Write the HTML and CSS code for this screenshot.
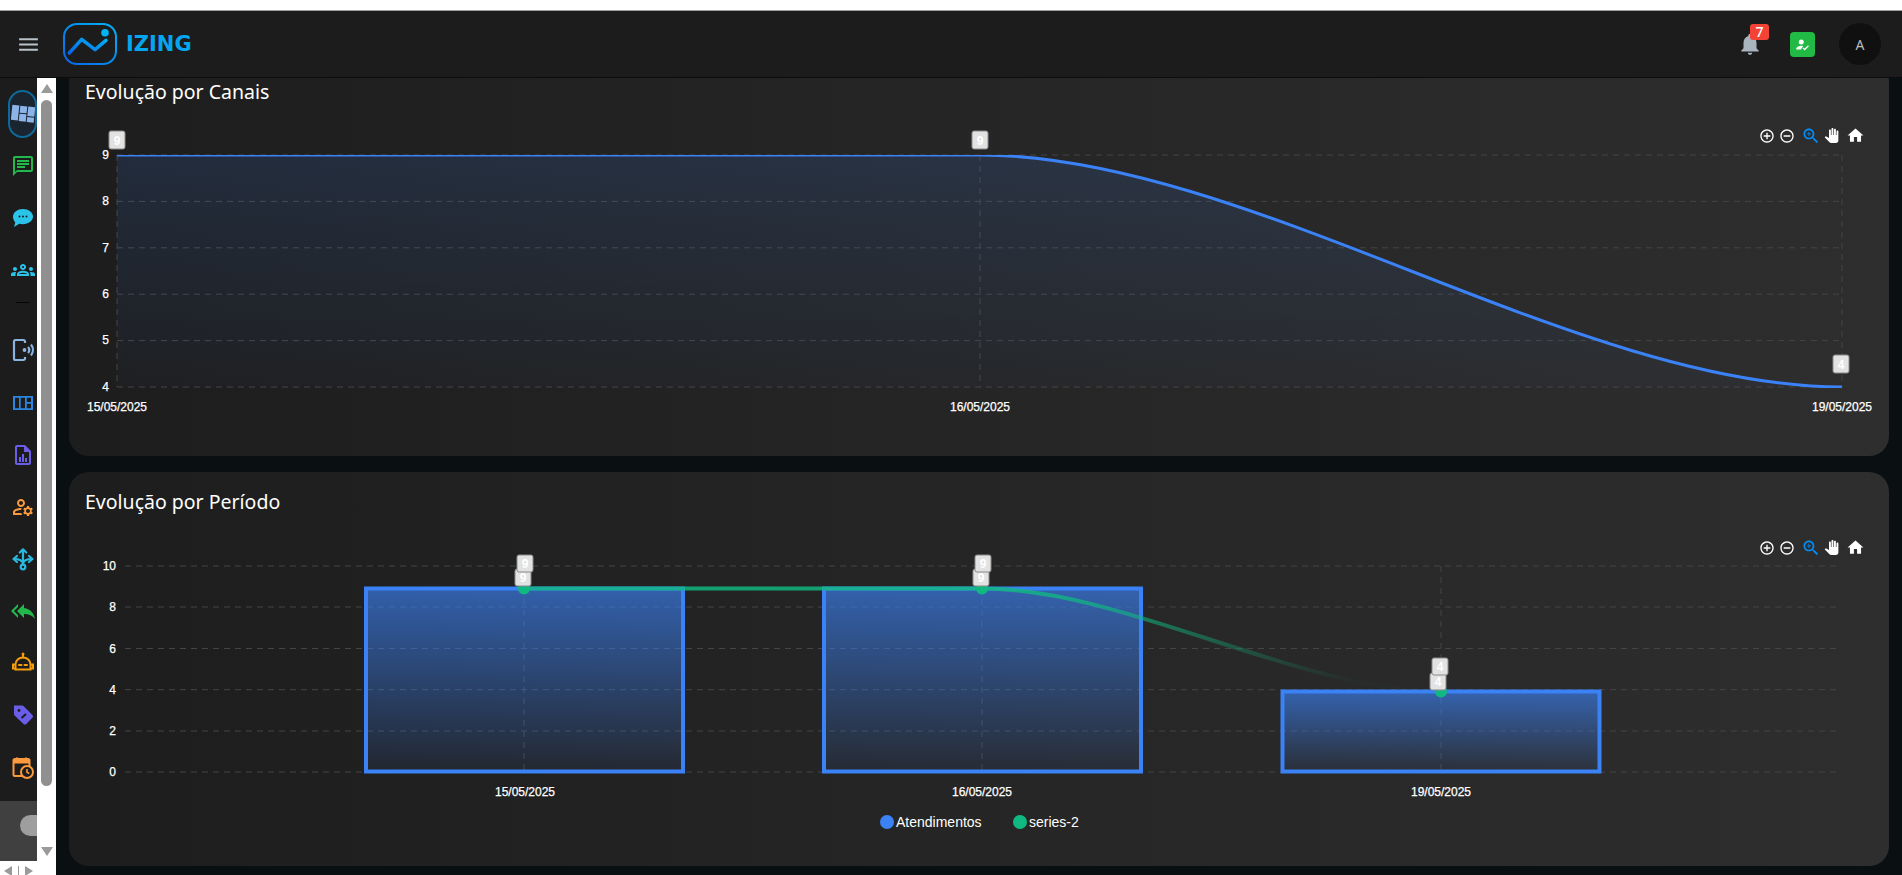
FILE: index.html
```html
<!DOCTYPE html>
<html lang="pt-BR">
<head>
    <meta charset="UTF-8">
    <meta name="viewport" content="width=device-width, initial-scale=1.0">
    <title>IZING - Dashboard</title>
    <link rel="stylesheet" href="styles.css">
</head>
<body>
    <header class="topbar">
        <svg class="menu-icon" viewBox="0 0 24 24"><path d="M3 18h18v-2H3v2zm0-5h18v-2H3v2zm0-7v2h18V6H3z"/></svg>
        <div class="brand">
            <svg class="brand-logo" viewBox="0 0 54 42">
                <defs>
                    <linearGradient id="logoStroke" x1="0" y1="1" x2="1" y2="0">
                        <stop offset="0" stop-color="#0a66e8"/>
                        <stop offset="1" stop-color="#00b2f5"/>
                    </linearGradient>
                </defs>
                <rect x="1" y="1" width="52" height="40" rx="13" fill="none" stroke="url(#logoStroke)" stroke-width="2"/>
                <polyline points="6.300,30 18.700,16.300 32,26.700 43,17.300" fill="none" stroke="url(#logoStroke)" stroke-width="3.500" stroke-linecap="round" stroke-linejoin="round"/>
                <circle cx="42" cy="9.700" r="3.800" fill="#00b4f5"/>
            </svg>
            <span class="brand-name">IZING</span>
        </div>
        <div class="topbar-right">
            <div class="bell">
                <svg class="bell-icon" viewBox="0 0 24 24"><path d="M12 22c1.100 0 2-.9 2-2h-4c0 1.100.9 2 2 2zm6-6v-5c0-3.070-1.630-5.640-4.500-6.320V4c0-.83-.67-1.500-1.500-1.500s-1.500.67-1.500 1.500v.68C7.640 5.360 6 7.920 6 11v5l-2 2v1h16v-1l-2-2z"/></svg>
                <span class="bell-badge">7</span>
            </div>
            <div class="status-btn">
                <svg viewBox="0 0 24 24">
                    <circle cx="10" cy="8" r="4"/>
                    <path d="M2 20v-1.500c0-3 5-4.700 8-4.700 1 0 2 .2 3 .5L9.500 20z"/>
                    <path class="status-check" d="M13 17.500l2.500 2.500 6-6"/>
                </svg>
            </div>
            <div class="avatar">A</div>
        </div>
    </header>

    <div class="layout">
        <aside class="sidebar">
            <div class="sidebar-body">
                <nav class="side-menu">
                    <a class="side-item side-item-active">
                        <span class="side-pill">
                            <svg class="side-icon" viewBox="0 0 24 24" fill="#8db4e8">
                                <g transform="rotate(6 12 12)">
                                    <rect x="0.500" y="4" width="7" height="15"/>
                                    <rect x="8.500" y="4" width="7" height="7"/>
                                    <rect x="8.500" y="12" width="7" height="7.500"/>
                                    <rect x="16.500" y="4" width="7" height="9.500"/>
                                    <rect x="16.500" y="14.500" width="7" height="5"/>
                                </g>
                            </svg>
                        </span>
                    </a>
                    <a class="side-item">
                        <svg class="side-icon" viewBox="0 0 24 24" fill="#22b84c"><path d="M20 2H4c-1.100 0-2 .9-2 2v18l4-4h14c1.100 0 2-.9 2-2V4c0-1.100-.9-2-2-2zm0 14H6l-2 2V4h16v12z"/><path d="M6 6h12v2H6zM6 9h12v2H6zM6 12h8v2H6z"/></svg>
                    </a>
                    <a class="side-item">
                        <svg class="side-icon" viewBox="0 0 24 24" fill="#2ac4ea">
                            <path d="M12 3c5.500 0 10 3.400 10 7.600s-4.500 7.600-10 7.600c-1.300 0-2.600-.2-3.700-.5L3 21l1.300-4.600C2.900 15 2 13 2 10.600 2 6.400 6.500 3 12 3z"/>
                            <circle class="icon-cut" cx="8.500" cy="10.500" r="1"/>
                            <circle class="icon-cut" cx="12" cy="10.500" r="1"/>
                            <circle class="icon-cut" cx="15.500" cy="10.500" r="1"/>
                        </svg>
                    </a>
                    <a class="side-item">
                        <svg class="side-icon" viewBox="0 0 24 24" fill="#2ac4ea"><path d="M4 13c1.100 0 2-.9 2-2s-.9-2-2-2-2 .9-2 2 .9 2 2 2zm1.130 1.100c-.37-.06-.74-.1-1.130-.1-.99 0-1.930.21-2.780.58C.48 14.900 0 15.620 0 16.430V18h4.500v-1.610c0-.83.23-1.610.63-2.290zM20 13c1.100 0 2-.9 2-2s-.9-2-2-2-2 .9-2 2 .9 2 2 2zm4 3.430c0-.81-.48-1.530-1.220-1.850-.85-.37-1.790-.58-2.780-.58-.39 0-.76.04-1.130.1.4.68.63 1.460.63 2.290V18H24v-1.570zm-7.760-2.780c-1.170-.52-2.610-.9-4.240-.9-1.630 0-3.070.39-4.240.9C6.680 14.130 6 15.210 6 16.390V18h12v-1.610c0-1.180-.68-2.260-1.760-2.740zM8.070 16c.09-.23.13-.39.91-.69.97-.38 1.990-.56 3.020-.56s2.050.18 3.020.56c.77.3.81.46.91.69H8.070zM12 8c.55 0 1 .45 1 1s-.45 1-1 1-1-.45-1-1 .45-1 1-1m0-2c-1.660 0-3 1.340-3 3s1.340 3 3 3 3-1.340 3-3-1.340-3-3-3z"/></svg>
                    </a>
                    <div class="side-sep"></div>
                    <a class="side-item">
                        <svg class="side-icon" viewBox="0 0 24 24" fill="none" stroke="#8ab4e0" stroke-width="2.200">
                            <path d="M14 5V3.500A1.500 1.500 0 0 0 12.500 2H4.500A1.500 1.500 0 0 0 3 3.500V20.500A1.500 1.500 0 0 0 4.500 22H12.500A1.500 1.500 0 0 0 14 20.500V19"/>
                            <circle cx="13.500" cy="12" r="1.900" fill="#8ab4e0" stroke="none"/>
                            <path d="M17 9a4.500 4.500 0 0 1 0 6"/>
                            <path d="M20 6.500a9 9 0 0 1 0 11"/>
                        </svg>
                    </a>
                    <a class="side-item">
                        <svg class="side-icon" viewBox="0 0 24 24" fill="#2a86e0"><path fill-rule="evenodd" d="M2 5h20v14H2zM4 6.800v10.400h4V6.800zM9.700 6.800v10.400H14V6.800zM15.800 6.800v4.200H20V6.800zM15.800 12.800v4.400H20v-4.400z"/></svg>
                    </a>
                    <a class="side-item">
                        <svg class="side-icon" viewBox="0 0 24 24" fill="#6a5ee8"><path d="M14 2H6c-1.100 0-2 .9-2 2v16c0 1.100.9 2 2 2h12c1.100 0 2-.9 2-2V8l-6-6zm4 18H6V4h7v5h5v11z"/><path d="M8 14h2v5H8zM11 11h2v8h-2zM14 15h2v4h-2z"/></svg>
                    </a>
                    <a class="side-item">
                        <svg class="side-icon" viewBox="0 0 24 24" fill="#fb9a3c"><path d="M4 18v-.65c0-.34.16-.66.41-.81C6.100 15.530 8.030 15 10 15c.03 0 .05 0 .08.01.1-.7.3-1.370.59-1.980-.22-.02-.44-.03-.67-.03-2.420 0-4.680.67-6.610 1.820-.88.52-1.390 1.500-1.390 2.530V20h9.260c-.42-.6-.75-1.280-.97-2H4zM10 12c2.210 0 4-1.790 4-4s-1.790-4-4-4-4 1.790-4 4 1.790 4 4 4zm0-6c1.100 0 2 .9 2 2s-.9 2-2 2-2-.9-2-2 .9-2 2-2z"/><path d="M20.750 16c0-.22-.03-.42-.06-.63l1.140-1.010-1-1.730-1.450.49c-.32-.27-.68-.48-1.080-.63L18 11h-2l-.3 1.490c-.4.15-.76.36-1.080.63l-1.450-.49-1 1.730 1.140 1.010c-.03.21-.06.41-.06.63s.03.42.06.63l-1.140 1.010 1 1.730 1.450-.49c.32.27.68.48 1.080.63L16 21h2l.3-1.490c.4-.15.76-.36 1.080-.63l1.450.49 1-1.730-1.140-1.010c.03-.21.06-.41.06-.63zM17 18c-1.100 0-2-.9-2-2s.9-2 2-2 2 .9 2 2-.9 2-2 2z"/></svg>
                    </a>
                    <a class="side-item">
                        <svg class="side-icon" viewBox="0 0 24 24" fill="none" stroke="#2ab8e0" stroke-width="2.200" stroke-linecap="round" stroke-linejoin="round">
                            <path d="M12 3v14.500"/>
                            <circle cx="12" cy="20" r="2.300"/>
                            <path d="M8.800 5.500 12 2.300 15.200 5.500"/>
                            <path d="M3 12c3 0 8 0 9 4.500 1-4.500 6-4.500 9-4.500"/>
                            <path d="M6 9l-3.500 3 3.500 3M18 9l3.500 3-3.500 3"/>
                        </svg>
                    </a>
                    <a class="side-item">
                        <svg class="side-icon" viewBox="0 0 24 24" fill="#22b84c"><path d="M7 8V5l-7 7 7 7v-3l-4-4 4-4zm6 1V5l-7 7 7 7v-4.100c5 0 8.500 1.600 11 5.100-1-5-4-10-11-11z"/></svg>
                    </a>
                    <a class="side-item">
                        <svg class="side-icon" viewBox="0 0 24 24" fill="none" stroke="#f59e0b" stroke-width="2" stroke-linecap="round">
                            <circle cx="12" cy="3" r="1.500" fill="#f59e0b" stroke="none"/>
                            <path d="M12 4v2.500"/>
                            <path d="M4.500 18.500V13.500a7.500 7 0 0 1 15 0v5z"/>
                            <path d="M4 13.500H2v4h2M20 13.500h2v4h-2"/>
                            <path d="M8 14h2.500M13.500 14H16"/>
                        </svg>
                    </a>
                    <a class="side-item">
                        <svg class="side-icon" viewBox="0 0 24 24" fill="#6a5ee8">
                            <path d="M3 2.500 11 2.500a2 2 0 0 1 1.500.6l8.900 8.900a2 2 0 0 1 0 2.800l-6.100 6.100a2 2 0 0 1-2.800 0L3.600 12.500a2 2 0 0 1-.6-1.500z"/>
                            <circle class="icon-cut" cx="8" cy="7.500" r="1.400"/>
                            <path class="icon-cut-line" d="M10.500 15l4.500-4"/>
                        </svg>
                    </a>
                    <a class="side-item">
                        <svg class="side-icon" viewBox="0 0 24 24">
                            <path d="M5 2.500h2v2H5zM14 2.500h2v2h-2z" fill="#fb9a3c"/>
                            <rect x="2.500" y="4" width="16" height="17" rx="1.500" fill="none" stroke="#fb9a3c" stroke-width="2"/>
                            <rect x="2.500" y="4" width="16" height="4.500" fill="#fb9a3c"/>
                            <circle cx="16" cy="17" r="6" fill="#1c1c1c" stroke="#fb9a3c" stroke-width="2"/>
                            <path d="M16 14v3.300l2.300 1.200" fill="none" stroke="#fb9a3c" stroke-width="1.600"/>
                        </svg>
                    </a>
                    <div class="side-toggle"><span class="toggle-pill"></span></div>
                </nav>
                <div class="vscroll">
                    <span class="arrow-up"></span>
                    <span class="vscroll-thumb"></span>
                    <span class="arrow-down"></span>
                </div>
            </div>
            <div class="hscroll">
                <span class="arrow-left"></span>
                <span class="hscroll-divider"></span>
                <span class="arrow-right"></span>
            </div>
        </aside>

        <main class="content">
            <div class="cards">
                <section class="card">
                    <h2 class="card-title">Evolução por Canais</h2>
                    <svg class="chart" viewBox="0 0 1820 340">
                        <defs>
                            <linearGradient id="areaFill" x1="0" y1="0" x2="0" y2="1">
                                <stop offset="0" stop-color="#3b82f6" stop-opacity="0.14"/>
                                <stop offset="1" stop-color="#3b82f6" stop-opacity="0.02"/>
                            </linearGradient>
                            <clipPath id="plotClip"><rect x="0" y="39" width="1820" height="233"/></clipPath>
                            <symbol id="tbPlus" viewBox="0 0 24 24"><path d="M13 7h-2v4H7v2h4v4h2v-4h4v-2h-4V7zm-1-5C6.480 2 2 6.480 2 12s4.480 10 10 10 10-4.480 10-10S17.520 2 12 2zm0 18c-4.410 0-8-3.590-8-8s3.590-8 8-8 8 3.590 8 8-3.590 8-8 8z"/></symbol>
                            <symbol id="tbMinus" viewBox="0 0 24 24"><path d="M7 11v2h10v-2H7zm5-9C6.480 2 2 6.480 2 12s4.480 10 10 10 10-4.480 10-10S17.520 2 12 2zm0 18c-4.410 0-8-3.590-8-8s3.590-8 8-8 8 3.590 8 8-3.590 8-8 8z"/></symbol>
                            <symbol id="tbZoom" viewBox="0 0 24 24"><path d="M15.500 14h-.79l-.28-.27C15.410 12.590 16 11.110 16 9.500 16 5.910 13.090 3 9.500 3S3 5.910 3 9.500 5.910 16 9.500 16c1.610 0 3.090-.59 4.230-1.570l.27.28v.79l5 4.990L20.490 19l-4.990-5zm-6 0C7.010 14 5 11.990 5 9.500S7.010 5 9.500 5 14 7.010 14 9.500 11.990 14 9.500 14z"/><path d="M12 10h-2v2H9v-2H7V9h2V7h1v2h2v1z"/></symbol>
                            <symbol id="tbHand" viewBox="0 0 24 24"><path d="M23 5.500V20c0 2.200-1.800 4-4 4h-7.300c-1.080 0-2.100-.43-2.850-1.190L1 14.830s1.260-1.230 1.300-1.250c.22-.19.49-.29.79-.29.22 0 .42.06.6.16.04.01 4.310 2.460 4.310 2.460V4c0-.83.67-1.500 1.500-1.500S11 3.170 11 4v7h1V1.500c0-.83.67-1.500 1.500-1.500S15 .67 15 1.500V11h1V2.500c0-.83.67-1.500 1.500-1.500s1.500.67 1.500 1.500V11h1V5.500c0-.83.67-1.500 1.500-1.500s1.500.67 1.500 1.500z"/></symbol>
                            <symbol id="tbHome" viewBox="0 0 24 24"><path d="M10 20v-6h4v6h5v-8h3L12 3 2 12h3v8z"/></symbol>
                        </defs>

                        <g class="grid-lines">
                            <line x1="48" y1="39" x2="1773" y2="39"/>
                            <line x1="48" y1="85.400" x2="1773" y2="85.400"/>
                            <line x1="48" y1="131.800" x2="1773" y2="131.800"/>
                            <line x1="48" y1="178.200" x2="1773" y2="178.200"/>
                            <line x1="48" y1="224.600" x2="1773" y2="224.600"/>
                            <line x1="48" y1="271" x2="1773" y2="271"/>
                            <line x1="48" y1="39" x2="48" y2="271"/>
                            <line x1="911" y1="39" x2="911" y2="271"/>
                            <line x1="1773" y1="39" x2="1773" y2="271"/>
                        </g>

                        <path d="M48 39L911 39C1178 39 1506 271 1773 271L48 271Z" fill="url(#areaFill)"/>
                        <path class="line-blue" clip-path="url(#plotClip)" d="M48 39L911 39C1178 39 1506 271 1773 271"/>

                        <g class="axis-y" text-anchor="end">
                            <text x="40" y="42.500">9</text>
                            <text x="40" y="89">8</text>
                            <text x="40" y="135.500">7</text>
                            <text x="40" y="182">6</text>
                            <text x="40" y="228">5</text>
                            <text x="40" y="274.500">4</text>
                        </g>
                        <g class="axis-x" text-anchor="middle">
                            <text x="48" y="295">15/05/2025</text>
                            <text x="911" y="295">16/05/2025</text>
                            <text x="1773" y="295">19/05/2025</text>
                        </g>

                        <g class="data-label">
                            <rect x="40" y="15" width="16" height="18" rx="2"/>
                            <text x="48" y="28.500">9</text>
                            <rect x="903" y="15" width="16" height="18" rx="2"/>
                            <text x="911" y="28.500">9</text>
                            <rect x="1764" y="239" width="16" height="18" rx="2"/>
                            <text x="1772" y="252.500">4</text>
                        </g>

                        <use href="#tbPlus" class="tb-icon" x="1690" y="12" width="16" height="16"/>
                        <use href="#tbMinus" class="tb-icon" x="1710" y="12" width="16" height="16"/>
                        <use href="#tbZoom" class="tb-icon tb-icon-active" x="1732" y="10" width="20" height="20"/>
                        <use href="#tbHand" class="tb-icon" x="1755" y="12" width="15" height="15"/>
                        <use href="#tbHome" class="tb-icon" x="1777" y="10" width="19" height="19"/>
                    </svg>
                </section>

                <section class="card">
                    <h2 class="card-title">Evolução por Período</h2>
                    <svg class="chart" viewBox="0 0 1820 340">
                        <defs>
                            <linearGradient id="barFill" x1="0" y1="0" x2="0" y2="1">
                                <stop offset="0" stop-color="#3b82f6" stop-opacity="0.65"/>
                                <stop offset="1" stop-color="#3b82f6" stop-opacity="0.07"/>
                            </linearGradient>
                            <linearGradient id="lineFade" gradientUnits="userSpaceOnUse" x1="0" y1="60" x2="0" y2="155">
                                <stop offset="0" stop-color="#10b981" stop-opacity="0.85"/>
                                <stop offset="1" stop-color="#10b981" stop-opacity="0.02"/>
                            </linearGradient>
                        </defs>

                        <g class="grid-lines">
                            <line x1="56" y1="40" x2="1772" y2="40"/>
                            <line x1="56" y1="81" x2="1772" y2="81"/>
                            <line x1="56" y1="122.500" x2="1772" y2="122.500"/>
                            <line x1="56" y1="163.700" x2="1772" y2="163.700"/>
                            <line x1="56" y1="205" x2="1772" y2="205"/>
                            <line x1="56" y1="246" x2="1772" y2="246"/>
                            <line x1="455" y1="40" x2="455" y2="246"/>
                            <line x1="913" y1="40" x2="913" y2="246"/>
                            <line x1="1372" y1="40" x2="1372" y2="246"/>
                        </g>

                        <rect class="bar" x="297" y="62.500" width="317" height="183"/>
                        <rect class="bar" x="755" y="62.500" width="317" height="183"/>
                        <rect class="bar" x="1213.500" y="165.500" width="317" height="80"/>

                        <path class="line-green" d="M455 62.500L913 62.500C1055 62.500 1230 165.500 1372 165.500"/>
                        <circle class="marker" cx="455" cy="62.500" r="6"/>
                        <circle class="marker" cx="913" cy="62.500" r="6"/>
                        <circle class="marker" cx="1372" cy="165.500" r="6"/>

                        <g class="axis-y" text-anchor="end">
                            <text x="47" y="44">10</text>
                            <text x="47" y="85">8</text>
                            <text x="47" y="127">6</text>
                            <text x="47" y="168">4</text>
                            <text x="47" y="209">2</text>
                            <text x="47" y="250">0</text>
                        </g>
                        <g class="axis-x" text-anchor="middle">
                            <text x="456" y="270">15/05/2025</text>
                            <text x="913" y="270">16/05/2025</text>
                            <text x="1372" y="270">19/05/2025</text>
                        </g>

                        <g class="data-label">
                            <rect x="446" y="43" width="16" height="17" rx="2"/>
                            <text x="454" y="56">9</text>
                            <rect x="448" y="29" width="16" height="17" rx="2"/>
                            <text x="456" y="42">9</text>
                            <rect x="904" y="43" width="16" height="17" rx="2"/>
                            <text x="912" y="56">9</text>
                            <rect x="906" y="29" width="16" height="17" rx="2"/>
                            <text x="914" y="42">9</text>
                            <rect x="1361" y="147" width="16" height="17" rx="2"/>
                            <text x="1369" y="160">4</text>
                            <rect x="1363" y="132" width="16" height="17" rx="2"/>
                            <text x="1371" y="145">4</text>
                        </g>

                        <use href="#tbPlus" class="tb-icon" x="1690" y="14" width="16" height="16"/>
                        <use href="#tbMinus" class="tb-icon" x="1710" y="14" width="16" height="16"/>
                        <use href="#tbZoom" class="tb-icon tb-icon-active" x="1732" y="12" width="20" height="20"/>
                        <use href="#tbHand" class="tb-icon" x="1755" y="14" width="15" height="15"/>
                        <use href="#tbHome" class="tb-icon" x="1777" y="12" width="19" height="19"/>

                        <g class="legend">
                            <circle cx="818" cy="296" r="7" fill="#3b82f6"/>
                            <text x="827" y="301">Atendimentos</text>
                            <circle cx="951" cy="296" r="7" fill="#10b981"/>
                            <text x="960" y="301">series-2</text>
                        </g>
                    </svg>
                </section>
            </div>
        </main>
    </div>
</body>
</html>
```

FILE: styles.css
```css
* {
    box-sizing: border-box;
}
html, body {
    height: 100%;
}
body {
    margin: 0;
    padding-top: 10px;
    display: flex;
    flex-direction: column;
    overflow: hidden;
    background-color: #fff;
    font-family: "Noto Sans", "Liberation Sans", sans-serif;
}

/* top bar */
.topbar {
    height: 68px;
    flex-shrink: 0;
    display: flex;
    align-items: center;
    padding: 0 21px 0 16px;
    background-color: #1c1c1c;
    border-top: 1px solid #a0a0a0;
    border-bottom: 1px solid #0c0c0c;
}
.menu-icon {
    width: 25px;
    height: 25px;
    fill: #b9c2c8;
}
.brand {
    display: flex;
    align-items: center;
    gap: 9px;
    margin-left: 22px;
}
.brand-logo {
    width: 54px;
    height: 42px;
}
.brand-name {
    font-family: "DejaVu Sans", "Liberation Sans", sans-serif;
    font-size: 21px;
    font-weight: 700;
    color: #04a6ef;
}
.topbar-right {
    margin-left: auto;
    display: flex;
    align-items: center;
}
.bell {
    position: relative;
    width: 26px;
    height: 26px;
    margin-right: 27px;
}
.bell-icon {
    width: 26px;
    height: 26px;
    fill: #aab4be;
    display: block;
}
.bell-badge {
    position: absolute;
    top: -7px;
    left: 13px;
    width: 19px;
    height: 16px;
    border-radius: 3px;
    background-color: #f44336;
    color: #fff;
    font-size: 14px;
    font-weight: 500;
    line-height: 16px;
    text-align: center;
}
.status-btn {
    width: 25px;
    height: 25px;
    margin-right: 24px;
    border-radius: 4px;
    background-color: #21ba45;
    display: flex;
    align-items: center;
    justify-content: center;
}
.status-btn svg {
    width: 15px;
    height: 15px;
    fill: #fff;
}
.status-check {
    fill: none;
    stroke: #fff;
    stroke-width: 2;
}
.avatar {
    width: 42px;
    height: 42px;
    border-radius: 50%;
    background-color: #101010;
    color: #bcbcbc;
    font-size: 14px;
    display: flex;
    align-items: center;
    justify-content: center;
}

/* page under the bar */
.layout {
    flex: 1;
    min-height: 0;
    display: flex;
}
.sidebar {
    width: 56px;
    flex-shrink: 0;
    display: flex;
    flex-direction: column;
    background-color: #fff;
}
.sidebar-body {
    flex: 1;
    min-height: 0;
    display: flex;
}
.side-menu {
    width: 37px;
    padding-top: 10px;
    display: flex;
    flex-direction: column;
    overflow: hidden;
    background-color: #1c1c1c;
}
.side-item {
    height: 52.1px;
    flex-shrink: 0;
    padding-left: 9px;
    display: flex;
    align-items: center;
    justify-content: center;
}
.side-icon {
    width: 24px;
    height: 24px;
    flex-shrink: 0;
}
.side-item-active {
    padding-left: 8px;
}
.side-pill {
    width: 29px;
    height: 48px;
    border: 2px solid #0e6a9a;
    border-radius: 15px;
    background-color: #1a2530;
    display: flex;
    align-items: center;
    justify-content: center;
}
.icon-cut {
    fill: #1c1c1c;
}
.icon-cut-line {
    fill: none;
    stroke: #1c1c1c;
    stroke-width: 2;
}
.side-sep {
    width: 14px;
    height: 1px;
    flex-shrink: 0;
    margin: 6px 0 21px 16px;
    background-color: #050505;
}
.side-toggle {
    margin-top: auto;
    height: 60px;
    flex-shrink: 0;
    padding: 14px 0 0 20px;
    background-color: #404040;
}
.toggle-pill {
    display: block;
    width: 30px;
    height: 21px;
    border-radius: 11px;
    background-color: #9e9e9e;
}

/* the fake scrollbars */
.vscroll {
    width: 19px;
    padding-top: 6px;
    display: flex;
    flex-direction: column;
    align-items: center;
    background-color: #fff;
}
.arrow-up, .arrow-down {
    width: 0;
    height: 0;
    border-left: 6.5px solid transparent;
    border-right: 6.5px solid transparent;
}
.arrow-up {
    border-bottom: 9px solid #9a9a9a;
}
.arrow-down {
    margin-top: 61px;
    border-top: 9px solid #9a9a9a;
}
.vscroll-thumb {
    width: 11px;
    height: 686px;
    margin-top: 7px;
    border-radius: 6px;
    background-color: #909090;
}
.hscroll {
    height: 14px;
    flex-shrink: 0;
    padding: 5px 0 0 4px;
    display: flex;
    align-items: flex-start;
    background-color: #fff;
}
.arrow-left, .arrow-right {
    width: 0;
    height: 0;
    border-top: 5px solid transparent;
    border-bottom: 5px solid transparent;
}
.arrow-left {
    border-right: 8px solid #9a9a9a;
}
.arrow-right {
    border-left: 8px solid #9a9a9a;
}
.hscroll-divider {
    width: 1px;
    height: 10px;
    margin: 0 6px;
    background-color: #9a9a9a;
}

/* main content, scrolled a bit so the first card starts under the bar */
.content {
    flex: 1;
    min-width: 0;
    padding: 0 13px;
    overflow: hidden;
    background-color: #0a0f12;
}
.cards {
    margin-top: -16px;
    display: flex;
    flex-direction: column;
    gap: 16px;
}
.card {
    height: 394px;
    flex-shrink: 0;
    border-radius: 20px;
    background: linear-gradient(90deg, #1d1d1d, #2e2e2e);
}
.card-title {
    margin: 0;
    height: 54px;
    padding: 16px 16px 10px;
    font-size: 19.5px;
    font-weight: 400;
    line-height: 28px;
    color: #fff;
}
.chart {
    display: block;
    width: 1820px;
    height: 340px;
}

/* chart parts */
.grid-lines line {
    stroke: #454545;
    stroke-width: 1;
    stroke-dasharray: 6 5;
}
.line-blue {
    fill: none;
    stroke: #3b82f6;
    stroke-width: 3;
}
.line-green {
    fill: none;
    stroke: url(#lineFade);
    stroke-width: 4;
}
.bar {
    fill: url(#barFill);
    stroke: #3b82f6;
    stroke-width: 4;
}
.marker {
    fill: #10b981;
}
.axis-y text, .axis-x text {
    font-family: "Liberation Sans", Arial, sans-serif;
    font-size: 12px;
    fill: #fff;
    stroke: #fff;
    stroke-width: 0.25px;
}
.data-label rect {
    fill: #e2e2e2;
    stroke: #8a8a8a;
    stroke-width: 1;
}
.data-label text {
    font-family: "Liberation Sans", Arial, sans-serif;
    font-size: 12px;
    font-weight: 700;
    fill: #fff;
    text-anchor: middle;
}
.tb-icon {
    fill: #fff;
}
.tb-icon-active {
    fill: #008ffb;
}
.legend text {
    font-family: "Liberation Sans", Arial, sans-serif;
    font-size: 14px;
    fill: #fff;
}
```
